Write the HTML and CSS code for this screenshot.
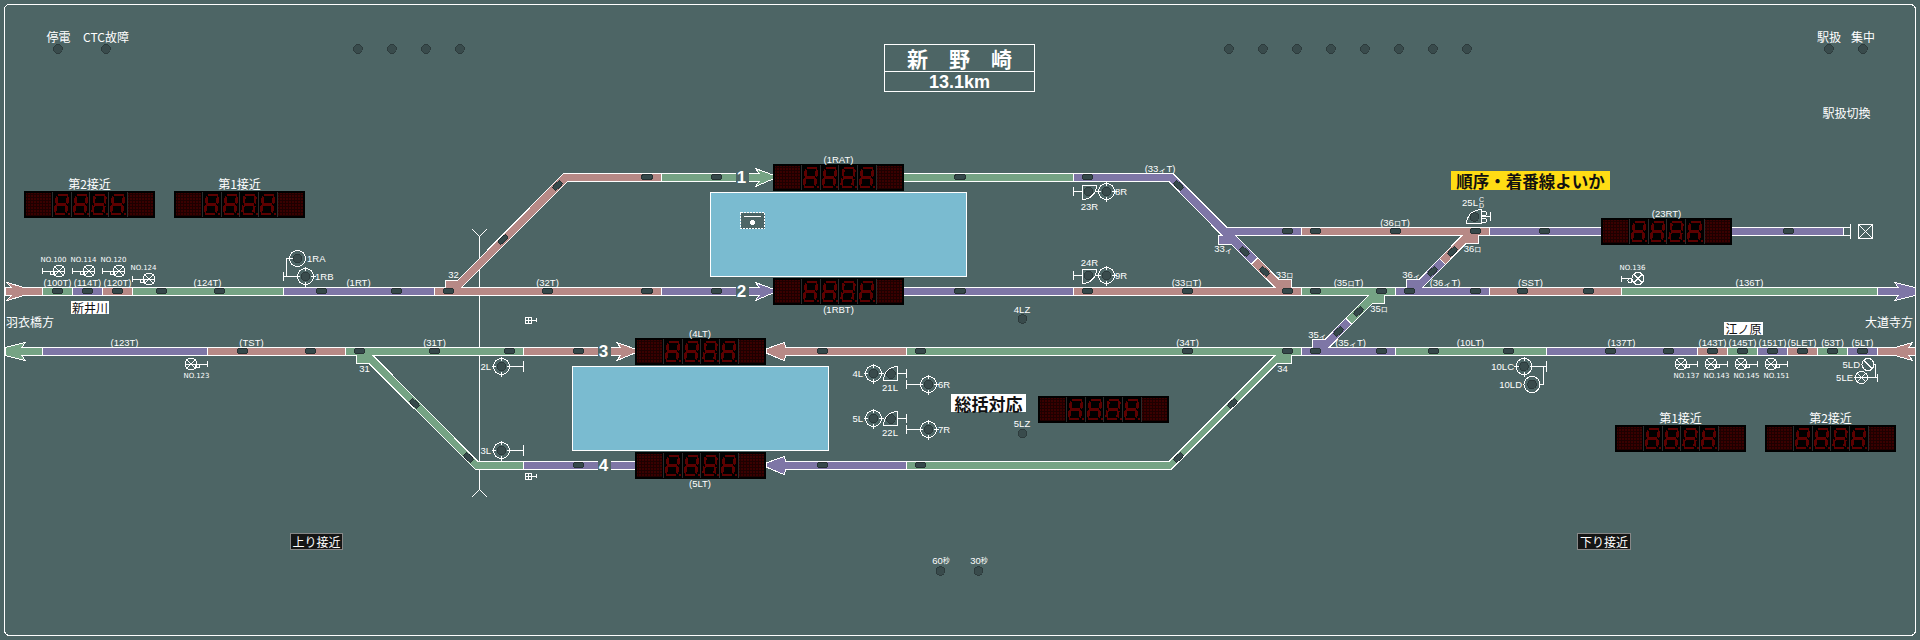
FILE: index.html
```html
<!DOCTYPE html>
<html lang="ja">
<head>
    <meta charset="UTF-8">
    <title>新野崎 CTC</title>
    <link rel="stylesheet" href="styles.css">
</head>
<body>
<svg class="board" width="1920" height="640" viewBox="0 0 1920 640">
    <defs>
        <pattern id="mesh" width="3" height="3" patternUnits="userSpaceOnUse">
            <rect class="mesh-bg" width="3" height="3"/>
            <path class="mesh-line" d="M0 .5H3M.5 0V3"/>
        </pattern>
        <g id="digit">
            <path class="seg" d="M5.500 4H15.500M4 13.500H14M3 23H13M5 5.500L4.200 12.500M3.900 14.500L3 21.500M16 5.500L15.200 12.500M14.900 14.500L14 21.500"/>
            <rect class="seg-dp" x="16" y="22" width="2" height="2"/>
        </g>
        <g id="display">
            <rect class="disp" width="131" height="27"/>
            <rect class="panel" x="2" y="2" width="25" height="23"/>
            <rect class="panel" x="104" y="2" width="25" height="23"/>
            <path class="cell-line" d="M28.500 1V26M47.500 1V26M65.500 1V26M84.500 1V26M103.500 1V26"/>
            <use href="#digit" x="28"/>
            <use href="#digit" x="47"/>
            <use href="#digit" x="65.500"/>
            <use href="#digit" x="84"/>
        </g>
        <rect id="cap" class="cap" x="-5.500" y="-2.500" width="11" height="5" rx="2.500"/>
        <circle id="lamp" class="lamp" r="4.300"/>
        <g id="sig">
            <circle class="ln" r="8"/>
            <circle class="lamp" r="4.300"/>
        </g>
        <g id="sig-t">
            <circle class="ln" r="8"/>
            <path class="ln" d="M0-10V-5.500M0 5.500V10M-10 0H-5.500M5.500 0H10"/>
            <circle class="lamp" r="4.300"/>
        </g>
        <g id="no">
            <circle class="ln" r="6"/>
            <path class="ln" d="M-16.500 0H6M-4-4L4 4M-4 4L4-4M-16.500-3V3"/>
            <circle class="ln" cx="-6.500" cy="2" r="2"/>
        </g>
        <path id="grid" class="ln" d="M.5-3H6.500V3H.5ZM.5 0H11.500M3.500-3V3M11.500-2V2"/>
    </defs>

    <rect class="frame" x="4.500" y="4.500" width="1911" height="631" rx="5"/>

    <!-- panel lamps -->
    <use href="#lamp" x="58" y="49"/><use href="#lamp" x="106" y="49"/>
    <use href="#lamp" x="358" y="49"/><use href="#lamp" x="392" y="49"/><use href="#lamp" x="426" y="49"/><use href="#lamp" x="460" y="49"/>
    <use href="#lamp" x="1229" y="49"/><use href="#lamp" x="1263" y="49"/><use href="#lamp" x="1297" y="49"/><use href="#lamp" x="1331" y="49"/>
    <use href="#lamp" x="1365" y="49"/><use href="#lamp" x="1399" y="49"/><use href="#lamp" x="1433" y="49"/><use href="#lamp" x="1467" y="49"/>
    <use href="#lamp" x="1829" y="49"/><use href="#lamp" x="1863" y="49"/>
    <use href="#lamp" x="1022.500" y="319"/><use href="#lamp" x="1022.500" y="433.500"/>
    <use href="#lamp" x="940.500" y="571"/><use href="#lamp" x="978.500" y="571"/>

    <text class="jp" x="58.500" y="36.500">停電</text>
    <text class="jp" x="106" y="36.500">CTC故障</text>
    <text class="jp" x="1829" y="36.500">駅扱</text>
    <text class="jp" x="1863" y="36.500">集中</text>
    <text class="jp" x="1846.500" y="112.500">駅扱切換</text>

    <!-- station name -->
    <rect class="ln" x="884.500" y="44.500" width="150" height="47"/>
    <path class="ln" d="M884 71.500H1035"/>
    <text class="title" x="959.500" y="58">新　野　崎</text>
    <text class="km" x="959.500" y="82">13.1km</text>

    <!-- insulation marker -->
    <path class="ln" d="M472 229L479.500 236.500L487 229M479.500 236.500V489.500M472 497L479.500 489.500L487 497"/>

    <!-- platforms -->
    <rect class="platform" x="710.500" y="192.500" width="256" height="84"/>
    <rect class="platform" x="572.500" y="366.500" width="256" height="84"/>
    <rect class="pf-mark" x="740.500" y="212.500" width="24" height="16"/>
    <path class="ln" d="M744 216.500H761"/>
    <circle class="dot" cx="752.500" cy="222.500" r="2.500"/>

    <!-- line 1 -->
    <path class="pink" d="M434.500 287.500H445.500V280.500H457.500L563.500 173.500H661.500V181.500H567.500L461.500 287.500H661.500V295.500H434.500Z"/>
    <path class="green" d="M735.500 173.500H661.500V181.500H735.500"/>
    <path class="green" d="M748.500 173.500H759L755.500 168.500L773 175V179L755.500 186.500L759 181.500H748.500"/>
    <rect class="green" x="903.500" y="173.500" width="170" height="8"/>
    <path class="purple" d="M1073.500 173.500H1173L1227 227.500H1301.500V235.500H1235.500L1257.800 257.800L1251.300 264.300L1231 244H1218.500V235.500H1222L1169 181.500H1073.500Z"/>

    <!-- line 2 -->
    <path class="pink" d="M42.500 287.500H24L7 282.500L11 287.500H5V295.500H11L7 300.500L24 295.500H42.500Z"/>
    <rect class="green" x="42.500" y="287.500" width="30" height="8"/>
    <rect class="purple" x="72.500" y="287.500" width="30" height="8"/>
    <rect class="pink" x="102.500" y="287.500" width="30" height="8"/>
    <rect class="green" x="132.500" y="287.500" width="151" height="8"/>
    <rect class="purple" x="283.500" y="287.500" width="151" height="8"/>
    <path class="purple" d="M735.500 287.500H661.500V295.500H735.500"/>
    <path class="purple" d="M748.500 287.500H759L755.500 282.500L773 289V293L755.500 300.500L759 295.500H748.500"/>
    <rect class="purple" x="903.500" y="287.500" width="170" height="8"/>
    <path class="pink" d="M1073.500 287.500H1275L1251.300 264.300L1257.800 257.800L1279 279.500H1291V287.500H1301.500V295.500H1073.500Z"/>
    <path class="pink" d="M1301.500 227.500H1489.500V235.500H1478.500V243.500H1466L1445.400 264.400L1439.500 258.500L1462 235.500H1301.500Z"/>
    <path class="purple" d="M1395.500 287.500H1406.500V279.500H1419L1439.500 258.500L1445.400 264.400L1422.700 287.500H1489.500V295.500H1395.500Z"/>
    <path class="green" d="M1301.500 287.500H1395.500V295.500H1384.500V303.500H1372.500L1351.700 324.300L1345.700 318.300L1368.500 295.500H1301.500Z"/>
    <path class="purple" d="M1301.500 347.500H1312.500V339.500H1325L1345.700 318.300L1351.700 324.300L1329 347.500H1395.500V355.500H1301.500Z"/>
    <rect class="pink" x="1489.500" y="287.500" width="132" height="8"/>
    <rect class="green" x="1621.500" y="287.500" width="256" height="8"/>
    <path class="purple" d="M1877.500 287.500H1898L1895 282.500L1915 287.500V295.500L1895 300.500L1898 295.500H1877.500Z"/>

    <!-- siding to 23RT -->
    <rect class="purple" x="1489.500" y="227.500" width="354" height="8"/>
    <path class="ln" d="M1843.500 227.500H1850.500M1843.500 235.500H1850.500M1850.500 224V239"/>
    <rect class="ln" x="1858.500" y="224.500" width="14" height="14"/>
    <path class="ln" d="M1858.500 224.500L1872.500 238.500M1858.500 238.500L1872.500 224.500"/>

    <!-- line 3 -->
    <path class="green" d="M42.500 347.500H22L25 342.500L5 347.500V355.500L25 360.500L22 355.500H42.500Z"/>
    <rect class="purple" x="42.500" y="347.500" width="165" height="8"/>
    <rect class="pink" x="207.500" y="347.500" width="138" height="8"/>
    <path class="green" d="M345.500 347.500H523.500V355.500H373L478 461.500H523.500V469.500H475.500L369 363.500H356.500V355.500H345.500Z"/>
    <path class="pink" d="M597.500 347.500H523.500V355.500H597.500"/>
    <path class="pink" d="M610.500 347.500H620.500L617 342.500L635 349V353L617 360.500L620.500 355.500H610.500"/>
    <path class="pink" d="M906.500 347.500H786L784 342.500L766 349V353L784 360.500L786 355.500H906.500Z"/>
    <path class="green" d="M906.500 347.500H1301.500V355.500H1291V363.500H1277L1171 469.500H906.500V461.500H1169L1275 355.500H906.500Z"/>
    <rect class="green" x="1395.500" y="347.500" width="151" height="8"/>
    <rect class="purple" x="1546.500" y="347.500" width="151" height="8"/>
    <rect class="pink" x="1697.500" y="347.500" width="30" height="8"/>
    <rect class="green" x="1727.500" y="347.500" width="30" height="8"/>
    <rect class="purple" x="1757.500" y="347.500" width="30" height="8"/>
    <rect class="pink" x="1787.500" y="347.500" width="30" height="8"/>
    <rect class="green" x="1817.500" y="347.500" width="30" height="8"/>
    <rect class="purple" x="1847.500" y="347.500" width="30" height="8"/>
    <path class="pink" d="M1877.500 347.500H1895L1912.500 342.500L1909 347.500H1915V355.500H1909L1912.500 360.500L1895 355.500H1877.500Z"/>

    <!-- line 4 -->
    <path class="purple" d="M597.500 461.500H523.500V469.500H597.500"/>
    <path class="purple" d="M610.500 461.500H635V469.500H610.500"/>
    <path class="purple" d="M906.500 461.500H786L784 456.500L766 463V467L784 474.500L786 469.500H906.500Z"/>

    <!-- displays -->
    <use href="#display" x="24" y="191"/><use href="#display" x="174" y="191"/>
    <use href="#display" x="773" y="164"/><use href="#display" x="773" y="278"/>
    <use href="#display" x="635" y="338"/><use href="#display" x="635" y="452"/>
    <use href="#display" x="1038" y="396"/><use href="#display" x="1601" y="218"/>
    <use href="#display" x="1615" y="425"/><use href="#display" x="1765" y="425"/>

    <!-- occupancy capsules -->
    <g>
        <use href="#cap" x="647" y="177"/><use href="#cap" x="716.500" y="177"/><use href="#cap" x="960" y="177"/><use href="#cap" x="1087.500" y="177"/>
        <use href="#cap" x="1287.500" y="231"/><use href="#cap" x="1315.500" y="231"/><use href="#cap" x="1395.500" y="231"/><use href="#cap" x="1475.500" y="231"/><use href="#cap" x="1544.500" y="231"/><use href="#cap" x="1788.500" y="231"/>
        <use href="#cap" x="57.500" y="291"/><use href="#cap" x="87.500" y="291"/><use href="#cap" x="117.500" y="291"/><use href="#cap" x="161.500" y="291"/><use href="#cap" x="219.500" y="291"/><use href="#cap" x="321.500" y="291"/><use href="#cap" x="396.500" y="291"/><use href="#cap" x="448.500" y="291"/>
        <use href="#cap" x="547.500" y="291"/><use href="#cap" x="647" y="291"/><use href="#cap" x="716.500" y="291"/><use href="#cap" x="960" y="291"/><use href="#cap" x="1087.500" y="291"/><use href="#cap" x="1187.500" y="291"/><use href="#cap" x="1287.500" y="291"/><use href="#cap" x="1315.500" y="291"/>
        <use href="#cap" x="1381.500" y="291"/><use href="#cap" x="1409.500" y="291"/><use href="#cap" x="1475.500" y="291"/><use href="#cap" x="1522.500" y="291"/><use href="#cap" x="1588.500" y="291"/>
        <use href="#cap" x="242.500" y="351"/><use href="#cap" x="310.500" y="351"/><use href="#cap" x="359.500" y="351"/><use href="#cap" x="434.500" y="351"/><use href="#cap" x="509.500" y="351"/><use href="#cap" x="578.500" y="351"/><use href="#cap" x="822.500" y="351"/><use href="#cap" x="920.500" y="351"/>
        <use href="#cap" x="1187.500" y="351"/><use href="#cap" x="1287.500" y="351"/><use href="#cap" x="1315.500" y="351"/><use href="#cap" x="1381.500" y="351"/><use href="#cap" x="1433.500" y="351"/><use href="#cap" x="1508.500" y="351"/><use href="#cap" x="1610.500" y="351"/><use href="#cap" x="1668.500" y="351"/>
        <use href="#cap" x="1712.500" y="351"/><use href="#cap" x="1742.500" y="351"/><use href="#cap" x="1772.500" y="351"/><use href="#cap" x="1802.500" y="351"/><use href="#cap" x="1832.500" y="351"/><use href="#cap" x="1862.500" y="351"/>
        <use href="#cap" x="578.500" y="465"/><use href="#cap" x="822.500" y="465"/><use href="#cap" x="920.500" y="465"/>
        <use href="#cap" transform="translate(557.500 185.500) rotate(-45)"/><use href="#cap" transform="translate(503 239.500) rotate(-45)"/>
        <use href="#cap" transform="translate(1178.500 185.500) rotate(45)"/><use href="#cap" transform="translate(1244.500 251.500) rotate(45)"/><use href="#cap" transform="translate(1264.500 271.500) rotate(45)"/>
        <use href="#cap" transform="translate(1432.500 271.500) rotate(-45)"/><use href="#cap" transform="translate(1452.500 251.500) rotate(-45)"/>
        <use href="#cap" transform="translate(1338.500 331.500) rotate(-45)"/><use href="#cap" transform="translate(1358.500 311.500) rotate(-45)"/>
        <use href="#cap" transform="translate(414.500 403.500) rotate(45)"/><use href="#cap" transform="translate(468.500 457.500) rotate(45)"/>
        <use href="#cap" transform="translate(1232.500 403.500) rotate(-45)"/><use href="#cap" transform="translate(1178.500 457.500) rotate(-45)"/>
    </g>

    <!-- line numbers -->
    <text class="num" x="741.500" y="177">1</text>
    <text class="num" x="741.500" y="291">2</text>
    <text class="num" x="603.500" y="351">3</text>
    <text class="num" x="603.500" y="465">4</text>

    <!-- track circuit names -->
    <g>
        <text x="57.500" y="282.500">(100T)</text><text x="87.500" y="282.500">(114T)</text><text x="117.500" y="282.500">(120T)</text>
        <text x="207.500" y="282.500">(124T)</text><text x="358.500" y="282.500">(1RT)</text><text x="547.500" y="282.500">(32T)</text>
        <text x="453.500" y="274.500">32</text>
        <text x="838.500" y="159.500">(1RAT)</text><text x="838.500" y="309.500">(1RBT)</text>
        <text x="1160" y="168.500">(33<tspan class="ki">ィ</tspan>T)</text>
        <text x="1395" y="222.500">(36<tspan class="ro">ロ</tspan>T)</text>
        <text x="1186.500" y="282.500">(33<tspan class="ro">ロ</tspan>T)</text>
        <text x="1348.500" y="282.500">(35<tspan class="ro">ロ</tspan>T)</text>
        <text x="1445" y="282.500">(36<tspan class="ki">ィ</tspan>T)</text>
        <text x="1530.500" y="282.500">(SST)</text><text x="1749.500" y="282.500">(136T)</text>
        <text x="1223.500" y="248.500">33<tspan class="ki">ィ</tspan></text>
        <text x="1284.500" y="274.500">33<tspan class="ro">ロ</tspan></text>
        <text x="1411.500" y="274.500">36<tspan class="ki">ィ</tspan></text>
        <text x="1472.500" y="248.500">36<tspan class="ro">ロ</tspan></text>
        <text x="1379" y="308.500">35<tspan class="ro">ロ</tspan></text>
        <text x="1317.500" y="334.500">35<tspan class="ki">ィ</tspan></text>
        <text x="1350.500" y="342.500">(35<tspan class="ki">ィ</tspan>T)</text>
        <text x="1282.500" y="368.500">34</text><text x="364.500" y="368.500">31</text>
        <text x="1187.500" y="342.500">(34T)</text><text x="1470.500" y="342.500">(10LT)</text>
        <text x="124.500" y="342.500">(123T)</text><text x="251.500" y="342.500">(TST)</text><text x="434.500" y="342.500">(31T)</text>
        <text x="1666.500" y="213.500">(23RT)</text>
        <text x="1621.500" y="342.500">(137T)</text><text x="1712.500" y="342.500">(143T)</text><text x="1742.500" y="342.500">(145T)</text><text x="1772.500" y="342.500">(151T)</text>
        <text x="1802" y="342.500">(5LET)</text><text x="1832.500" y="342.500">(53T)</text><text x="1862.500" y="342.500">(5LT)</text>
        <text x="700" y="333.500">(4LT)</text><text x="700" y="483.500">(5LT)</text>
        <text x="1022" y="309">4LZ</text><text x="1022" y="423">5LZ</text>
        <text x="941" y="560">60<tspan class="sec">秒</tspan></text>
        <text x="979" y="560">30<tspan class="sec">秒</tspan></text>
    </g>

    <!-- place names -->
    <text class="jp" x="89.500" y="183.500">第2接近</text>
    <text class="jp" x="239.500" y="183.500">第1接近</text>
    <text class="jp" x="1680.500" y="417.500">第1接近</text>
    <text class="jp" x="1830.500" y="417.500">第2接近</text>
    <text class="jp" x="30" y="321.500">羽衣橋方</text>
    <text class="jp" x="1889" y="321.500">大道寺方</text>

    <rect class="tag" x="71" y="301" width="38" height="13"/>
    <text class="jp tag-text" x="90" y="307.500">新井川</text>
    <rect class="tag" x="1724" y="322" width="39" height="13"/>
    <text class="jp tag-text" x="1743.500" y="328.500">江ノ原</text>
    <rect class="tag" x="951" y="394" width="75" height="18"/>
    <text class="bold-tag" x="988.500" y="403">総括対応</text>
    <rect class="tag-yellow" x="1451" y="171" width="159" height="19"/>
    <text class="bold-tag order" x="1530.500" y="180.500">順序・着番線よいか</text>
    <rect class="tag-dark" x="290.500" y="533.500" width="52" height="16"/>
    <text class="jp" x="316.500" y="541.500">上り接近</text>
    <rect class="tag-dark" x="1577.500" y="533.500" width="53" height="16"/>
    <text class="jp" x="1604" y="541.500">下り接近</text>

    <!-- signals -->
    <path class="ln" d="M297 258.500H286.500V276.500M283.500 272V281M283.500 276.500H297"/>
    <use href="#sig" x="297.500" y="258.500"/><use href="#sig-t" x="305.500" y="276.500"/>
    <text class="start" x="307" y="258.500">1RA</text><text class="start" x="315" y="276.500">1RB</text>

    <path class="ln" d="M509 366.500H523.500M523.500 361V372M509 450.500H523.500M523.500 445V456"/>
    <use href="#sig-t" x="501.500" y="366.500"/><use href="#sig-t" x="501.500" y="450.500"/>
    <text class="end" x="491" y="366.500">2L</text><text class="end" x="491" y="450.500">3L</text>

    <path class="ln" d="M881 373.500H884M897.500 373.500H906.500M906.500 369V378M906.500 384.500H920M906.500 380V389"/>
    <path class="ln" d="M881 418.500H884M897.500 418.500H906.500M906.500 414V423M906.500 429.500H920M906.500 425V434"/>
    <use href="#sig-t" x="873.500" y="373.500"/><use href="#sig-t" x="873.500" y="418.500"/>
    <path class="ln" d="M883.500 380.500H897.500V366.500A14 14 0 0 0 883.500 380.500Z"/>
    <path class="ln" d="M883.500 425.500H897.500V411.500A14 14 0 0 0 883.500 425.500Z"/>
    <use href="#lamp" x="891" y="374"/><use href="#lamp" x="891" y="419"/>
    <use href="#sig-t" x="928.500" y="384.500"/><use href="#sig-t" x="928.500" y="429.500"/>
    <text class="end" x="863" y="373.500">4L</text><text class="end" x="863" y="418.500">5L</text>
    <text x="890" y="387.500">21L</text><text x="890" y="432.500">22L</text>
    <text class="start" x="938" y="384.500">6R</text><text class="start" x="938" y="429.500">7R</text>

    <path class="ln" d="M1073.500 191.500H1082.500M1073.500 187V196M1096 191.500H1099M1073.500 275.500H1082.500M1073.500 271V280M1096 275.500H1099"/>
    <path class="ln" d="M1082.500 185.500H1096.500A14 14 0 0 1 1082.500 199.500Z"/>
    <path class="ln" d="M1082.500 269.500H1096.500A14 14 0 0 1 1082.500 283.500Z"/>
    <use href="#lamp" x="1088.500" y="191.500"/><use href="#lamp" x="1088.500" y="275.500"/>
    <use href="#sig-t" x="1106.500" y="191.500"/><use href="#sig-t" x="1106.500" y="275.500"/>
    <text class="start" x="1115" y="191.500">8R</text><text class="start" x="1115" y="275.500">9R</text>
    <text x="1089.500" y="206.500">23R</text><text x="1089.500" y="262.500">24R</text>

    <path class="ln" d="M1466.500 223.500H1481.500V209.500A15 14 0 0 0 1466.500 223.500Z"/>
    <use href="#lamp" x="1474.500" y="217"/>
    <circle class="ln" cx="1484" cy="213.500" r="2.500"/><circle class="ln" cx="1484" cy="220.500" r="2.500"/>
    <path class="ln" d="M1482 216.500H1490M1490.500 212V221"/>
    <text x="1470" y="202.500">25L</text><text class="mini" x="1481.500" y="199">C</text><text class="mini" x="1481.500" y="205.500">D</text>

    <path class="ln" d="M1532 366.500H1546.500M1546.500 361V372M1543.500 366.500V384.500H1540"/>
    <use href="#sig-t" x="1524" y="366.500"/><use href="#sig" x="1532" y="384.500"/>
    <text class="end" x="1514" y="366.500">10LC</text><text class="end" x="1522" y="384.500">10LD</text>

    <circle class="ln" cx="1868" cy="364.500" r="6"/>
    <path class="ln" d="M1864 360.500L1872 368.500M1874 364.500H1875.500V377.500"/>
    <g transform="translate(1861.500 377.500)">
        <circle class="ln" r="6"/>
        <path class="ln" d="M-8 0H16M-4-4L4 4M-4 4L4-4M16-4V4"/>
    </g>
    <text class="end" x="1860" y="364.500">5LD</text><text class="end" x="1853" y="377.500">5LE</text>

    <!-- approach signals -->
    <use href="#no" x="59" y="271"/><use href="#no" x="89" y="271"/><use href="#no" x="119" y="271"/><use href="#no" x="149" y="279"/>
    <g>
        <text class="no" x="53.500" y="259.500">NO.100</text><text class="no" x="83.500" y="259.500">NO.114</text><text class="no" x="113.500" y="259.500">NO.120</text><text class="no" x="143.500" y="267.500">NO.124</text>
        <text class="no" x="196.500" y="375.500">NO.123</text><text class="no" x="1632.500" y="267.500">NO.136</text>
        <text class="no" x="1686.500" y="375.500">NO.137</text><text class="no" x="1716.500" y="375.500">NO.143</text><text class="no" x="1746.500" y="375.500">NO.145</text><text class="no" x="1776.500" y="375.500">NO.151</text>
    </g>
    <use href="#no" transform="translate(191 364) scale(-1 1)"/>
    <use href="#no" transform="translate(1681 364) scale(-1 1)"/>
    <use href="#no" transform="translate(1711 364) scale(-1 1)"/>
    <use href="#no" transform="translate(1741 364) scale(-1 1)"/>
    <use href="#no" transform="translate(1771 364) scale(-1 1)"/>
    <g transform="translate(1638 278.500)">
        <circle class="ln" r="6"/>
        <path class="ln" d="M-16.500 0H-6M-4-4L4 4M-4 4L4-4M-16.500-3V3"/>
        <circle class="ln" cx="-8" cy="2" r="2"/>
    </g>

    <use href="#grid" x="525" y="320"/>
    <use href="#grid" x="525" y="476"/>
</svg>
</body>
</html>
```
FILE: styles.css
```css
html, body {
    margin: 0;
    padding: 0;
    background: #4d6565;
}
.board {
    display: block;
    shape-rendering: crispEdges;
}
text {
    font-family: "Liberation Sans", "Noto Sans CJK JP", sans-serif;
    font-size: 9.5px;
    fill: #fff;
    text-anchor: middle;
    dominant-baseline: central;
}
text.start { text-anchor: start; }
text.end { text-anchor: end; }
.jp {
    font-family: "Noto Sans CJK JP", sans-serif;
    font-size: 12px;
}
.no {
    font-family: "DejaVu Sans", sans-serif;
    font-size: 7px;
}
.ki, .ro, .sec {
    font-family: "Noto Sans CJK JP", sans-serif;
}
.ki { font-size: 8px; }
.ro { font-size: 7px; }
.sec { font-size: 7px; }
.mini { font-size: 7px; }
.title {
    font-family: "Noto Sans CJK JP", sans-serif;
    font-size: 21px;
    font-weight: 700;
}
.km {
    font-size: 18px;
    font-weight: 700;
}
.num {
    font-size: 17px;
    font-weight: 700;
}
.frame, .ln {
    fill: none;
    stroke: #fff;
}
.dot { fill: #fff; }
.platform {
    fill: #7abbd0;
    stroke: #fff;
}
.pf-mark {
    fill: #4d6565;
    stroke: #fff;
    stroke-dasharray: 2 1;
}
.pink, .green, .purple { stroke: #fff; }
.pink { fill: #b78986; }
.green { fill: #75a384; }
.purple { fill: #7e76a6; }
.cap {
    fill: #35484a;
    stroke: #263233;
}
.lamp {
    fill: #394b4c;
    stroke: #2d3b3c;
}
.disp { fill: #000; }
.panel { fill: url(#mesh); }
.mesh-bg { fill: #3a0000; }
.mesh-line { stroke: #1e0000; fill: none; }
.cell-line { stroke: #2c2c2c; fill: none; }
.seg { stroke: #5c0000; stroke-width: 2.5; fill: none; }
.seg-dp { fill: #5c0000; }
.tag { fill: #fff; }
.tag-text { fill: #111; }
.tag-yellow { fill: #ffdc14; }
.tag-dark { fill: #151515; stroke: #888; }
.bold-tag {
    font-family: "Noto Sans CJK JP", sans-serif;
    font-size: 17px;
    font-weight: 700;
    fill: #111;
}
.order { font-size: 16.5px; }
```
